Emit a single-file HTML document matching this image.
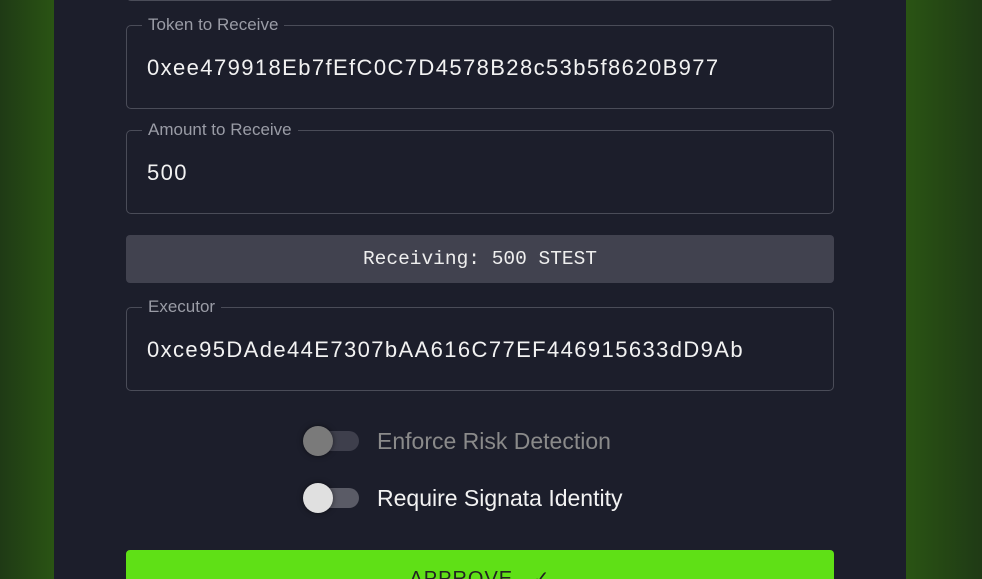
<!DOCTYPE html>
<html><head><meta charset="utf-8"><style>
html,body{margin:0;padding:0;width:982px;height:579px;overflow:hidden;font-family:"Liberation Sans",sans-serif;}
body{background:linear-gradient(90deg,#1f3a15 0px,#2a5414 54px,#2a5414 906px,#1f3a15 982px);position:relative;}
.panel{position:absolute;left:54px;top:0;width:852px;height:579px;background:#1c1e2b;}
.field{position:absolute;left:126px;width:706px;border:1px solid #4a4c58;border-radius:5px;}
.lab{position:absolute;left:15px;top:-11px;padding:0 6px;background:#1c1e2b;color:#9a9ca6;font-size:17px;line-height:19px;}
.val{position:absolute;left:20px;color:#f2f2f2;font-size:22px;letter-spacing:1.4px;}
.recv{position:absolute;left:126px;top:235px;width:708px;height:48px;background:#41424f;border-radius:4px;color:#eee;font-family:"Liberation Mono",monospace;font-size:19.5px;line-height:48px;text-align:center;}
.tog{position:absolute;left:303px;width:56px;}
.track{position:absolute;left:8px;top:8px;width:48px;height:20px;border-radius:10px;}
.knob{position:absolute;left:0;top:3px;width:30px;height:30px;border-radius:50%;box-shadow:0 0 6px rgba(0,0,0,.5);}
.tl{position:absolute;left:377px;font-size:23px;}
.btn{position:absolute;left:126px;top:550px;width:708px;height:40px;background:#5fe016;border-radius:4px;color:#222;font-size:20px;text-align:center;line-height:58px;letter-spacing:1px;}
</style></head><body>
<div class="panel"></div>
<div class="field" style="top:-84px;height:83px;"></div>
<div class="field" style="top:25px;height:82px;"><div class="lab">Token to Receive</div><div class="val" style="top:29px">0xee479918Eb7fEfC0C7D4578B28c53b5f8620B977</div></div>
<div class="field" style="top:130px;height:82px;"><div class="lab">Amount to Receive</div><div class="val" style="top:29px">500</div></div>
<div class="recv">Receiving: 500 STEST</div>
<div class="field" style="top:307px;height:82px;"><div class="lab">Executor</div><div class="val" style="top:29px">0xce95DAde44E7307bAA616C77EF446915633dD9Ab</div></div>
<div class="tog" style="top:423px"><div class="track" style="background:#3e3f4c"></div><div class="knob" style="background:#7a7a7a"></div></div>
<div class="tl" style="top:428px;color:#8a8a8a">Enforce Risk Detection</div>
<div class="tog" style="top:480px"><div class="track" style="background:#5a5b66"></div><div class="knob" style="background:#e0e0e0"></div></div>
<div class="tl" style="top:485px;color:#f2f2f2">Require Signata Identity</div>
<div class="btn">APPROVE &nbsp; ✓</div>
</body></html>
